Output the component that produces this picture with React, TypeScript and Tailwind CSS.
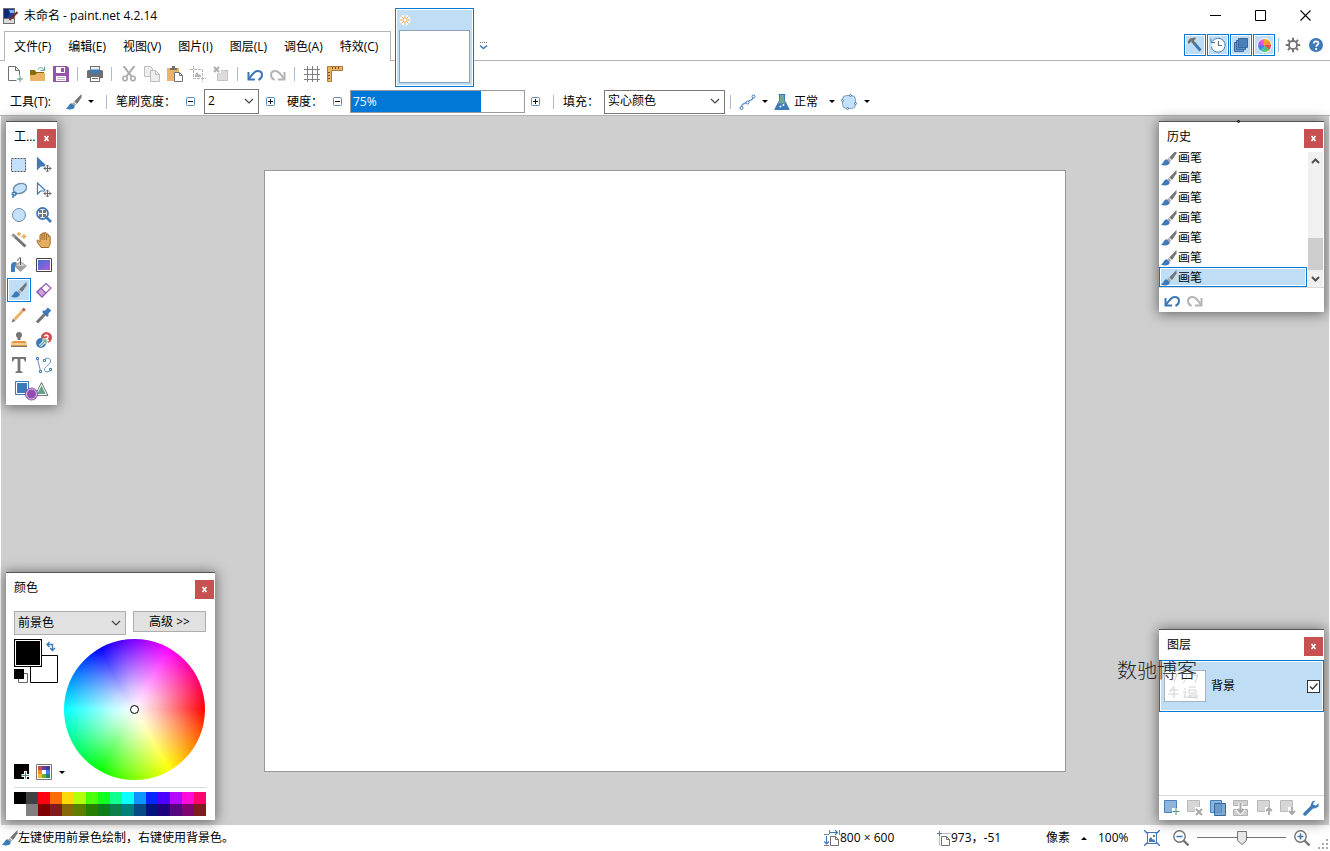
import { useState, type ReactNode } from 'react';
import { clsx } from 'clsx';

type IconProps = { children: ReactNode; w?: number; h?: number };

function Icon({ children, w = 16, h = 16 }: IconProps) {
  return (
    <svg width={w} height={h} viewBox={`0 0 ${w} ${h}`} fill="none" className="block shrink-0" aria-hidden="true">
      {children}
    </svg>
  );
}

/* ---------- shared glyphs ---------- */

const BrushIcon = () => (
  <Icon>
    <path d="M15.500 0 8.200 7.400l2.800 2.600 4.500-6.500z" fill="#757575" />
    <path d="m7.600 8-1.400 1.500 2.400 2.400 1.600-1.300z" fill="#a9a9a9" />
    <path d="M5.600 9.200c-2.800.1-2.600 3.600-5.600 5.300 3.600 1.900 9 .8 8.700-2.600z" fill="#3f7ab8" />
  </Icon>
);

const UndoIcon = () => (
  <Icon>
    <path d="M1.500 6v7.500H8" stroke="#3d77b3" strokeWidth="2" />
    <path d="M2 13C4.500 9 7 5 10.500 5c3 0 4.500 1.800 4.500 4 0 2.500-1.400 4-3.500 5" stroke="#3d77b3" strokeWidth="2" />
  </Icon>
);

const RedoIcon = () => (
  <Icon>
    <path d="M14.500 6v7.500H8" stroke="#b4b4b4" strokeWidth="2" />
    <path d="M14 13C11.500 9 9 5 5.500 5 2.500 5 1 6.800 1 9c0 2.500 1.400 4 3.500 5" stroke="#b4b4b4" strokeWidth="2" />
  </Icon>
);

const CaretIcon = ({ up = false }: { up?: boolean }) => (
  <Icon w={8} h={5}>
    <path d={up ? 'M1 4h6L4 1z' : 'M1 1h6L4 4z'} fill="#000" />
  </Icon>
);

const ChevronIcon = () => (
  <Icon w={10} h={7}>
    <path d="m1 1 4 4 4-4" stroke="#444" strokeWidth="1.200" />
  </Icon>
);

/* ---------- main toolbar ---------- */

const NewIcon = () => (
  <Icon>
    <path d="M9.500 14.500h-8v-14h7l4 4v5M8.500.5v4h4" stroke="#707070" />
    <path d="M13 10v6M10 13h6" stroke="#4f9878" />
  </Icon>
);
const OpenIcon = () => (
  <Icon>
    <path d="M0 4h5l1 2h8v3H0z" fill="#8a6a10" />
    <path d="M0 15V9h5l2-2h8v8z" fill="#e9b465" />
    <path d="M8 3.500c1-2.500 4-2.500 6 .5M14.500.5v4h-4" stroke="#62a589" />
  </Icon>
);
const SaveIcon = () => (
  <Icon>
    <path d="M0 0h14l2 2v14H0z" fill="#8f56ac" />
    <path d="M3 1h9v6H3zM3 10h10v5H3z" fill="#fff" />
    <path d="M8 2h3v4H8z" fill="#8f56ac" />
    <path d="M4 11.500h8M4 13.500h8" stroke="#b9b9b9" />
  </Icon>
);
const PrintIcon = () => (
  <Icon>
    <path d="M3 0h10v4H3z" fill="#707070" />
    <path d="M4 1h8v3H4z" fill="#eee" />
    <path d="M1 4h14l1 1v7H0V5z" fill="#707070" />
    <path d="M3 3.500h10v4H3z" fill="#3f7ab8" />
    <path d="M3 10h10v6H3z" fill="#707070" />
    <path d="M4 11h8v4H4z" fill="#fff" />
    <path d="M5 12.500h6" stroke="#707070" />
  </Icon>
);
const CutIcon = () => (
  <Icon>
    <path d="M2.500 0 11 11M13.500 0 5 11" stroke="#aaa" strokeWidth="2" />
    <circle cx="4" cy="12.500" r="2.200" stroke="#aaa" strokeWidth="1.600" />
    <circle cx="12" cy="12.500" r="2.200" stroke="#aaa" strokeWidth="1.600" />
  </Icon>
);
const CopyIcon = () => (
  <Icon>
    <path d="M.5.5h6l2 2v8h-8z" fill="#eee" stroke="#bdbdbd" />
    <path d="M6.500 4.500h5l4 4v7h-9z" fill="#eee" stroke="#bdbdbd" />
    <path d="M11.500 4.500v4h4" stroke="#bdbdbd" />
  </Icon>
);
const PasteIcon = () => (
  <Icon>
    <path d="M0 2h12v5H7v8H0z" fill="#e9b465" />
    <path d="M3 4V2h2V0h3v2h2v2z" fill="#707070" />
    <path d="M7.500 6.500h5l3 3v6h-8zM12.500 6.500v3h3" fill="#fff" stroke="#707070" />
  </Icon>
);
const CropIcon = () => (
  <Icon>
    <path d="M3.500 0v12.500H16M0 3.500h12.500V16" stroke="#b4b4b4" strokeDasharray="3 1" />
    <path d="M5 11V9l2-3 2 3 1-1 1.500 3z" fill="#b4b4b4" />
  </Icon>
);
const DeselectIcon = () => (
  <Icon>
    <path d="M4 4h11v11H4z" fill="#dcdcdc" />
    <path d="M4.500 4.500h10v10h-10z" stroke="#adadad" strokeDasharray="1 1" />
    <path d="M0 0h8v7H0z" fill="#fff" />
    <path d="m1 1 5 5M6 1 1 6" stroke="#adadad" strokeWidth="2" />
  </Icon>
);
const GridIcon = () => (
  <Icon>
    <path d="M3.500 0v16M8.500 0v16M13.500 0v16M0 3.500h16M0 8.500h16M0 13.500h16" stroke="#808080" />
  </Icon>
);
const RulerIcon = () => (
  <Icon>
    <path d="M.5.5h15v4h-11v11h-4z" fill="#e9b465" stroke="#a97c3c" />
    <path d="M5.500 1v2M8.500 1v2M11.500 1v2M1 6.500h2M1 9.500h2M1 12.500h2" stroke="#704d20" />
  </Icon>
);

/* ---------- window toggles ---------- */

const HammerIcon = () => (
  <Icon>
    <path d="m7 6 6.500 7.500" stroke="#3f7ab8" strokeWidth="3" />
    <path d="m5 4 3 3" stroke="#707070" strokeWidth="2.500" />
    <path d="M.5 5 3 1.500 8 .5l1 1-2.500 2.500L4 4.500 2 7z" fill="#707070" />
  </Icon>
);
const ClockIcon = () => (
  <Icon>
    <path d="M2.200 4.500a7 7 0 1 1-1 5" stroke="#3f7ab8" fill="#fff" />
    <path d="M8.500 4v4.500H12" stroke="#707070" strokeWidth="1.200" />
    <path d="M1 1.500v4h4" stroke="#3f7ab8" />
  </Icon>
);
const LayersIcon = () => (
  <Icon>
    <path d="M1.500 5.500h9v9h-9z" fill="#6f9fcf" stroke="#3668a0" />
    <path d="M3.500 3.500h9v9h-9z" fill="#5f93c6" stroke="#3668a0" />
    <path d="M5.500 1.500h9v9h-9z" fill="#4a7fb7" stroke="#3668a0" />
  </Icon>
);
const WheelIcon = () => (
  <span className="block size-[15px] rounded-full border border-white bg-[conic-gradient(#f5a623_0_12%,#ff8a3b_0_25%,#ef4b5f_0_37%,#5cc25c_0_50%,#47c2a5_0_62%,#4a7fe0_0_75%,#b058f0_0_87%,#f05cd8_0)]" />
);
const GearIcon = () => (
  <Icon>
    <circle cx="8" cy="8" r="4" stroke="#757575" strokeWidth="2" />
    <path
      d="M8 .8V4M8 12v3.200M.8 8H4M12 8h3.200M2.900 2.900 5.200 5.200M10.800 10.800l2.300 2.300M2.900 13.100l2.300-2.300M10.800 5.200l2.300-2.300"
      stroke="#757575"
      strokeWidth="2"
    />
    <circle cx="8" cy="8" r="3" fill="#fff" />
  </Icon>
);
const HelpIcon = () => (
  <Icon>
    <circle cx="8" cy="8" r="7" fill="#3f7ab8" />
    <path d="M5.800 6.500c0-3 4.600-2.800 4.600-.3 0 1.600-2.200 1.700-2.200 3.500M8.200 11v2" stroke="#fff" strokeWidth="1.800" />
  </Icon>
);

/* ---------- tool box ---------- */

const RectSelectIcon = () => (
  <Icon>
    <path d="M.5 1.500h14v13H.5z" fill="#c4e1fb" stroke="#555" strokeDasharray="2 1" />
  </Icon>
);
const MoveIcon = ({ solid = false }: { solid?: boolean }) => (
  <Icon>
    <path d="M1.500 1v11l3-3h5.500z" fill={solid ? '#3f7ab8' : '#fff'} stroke="#3f7ab8" strokeWidth="1.200" />
    <path d="M9 8h7v8H8z" fill="#fff" />
    <path
      d="M11.500 8v7M8 11.500h7M10 9.500l1.500-1.500L13 9.500M10 13.500l1.500 1.500 1.500-1.500M9.500 10 8 11.500 9.500 13M13.500 10l1.500 1.500-1.500 1.500"
      stroke="#666"
    />
  </Icon>
);
const LassoIcon = () => (
  <Icon>
    <ellipse cx="9" cy="6.500" rx="6.800" ry="4.800" transform="rotate(-20 9 6.500)" fill="#c4e1fb" stroke="#6f8ba6" strokeWidth="1.400" />
    <path d="M1 11.500c2-2 5-1 4 1s-4 0-4-.5M2 12v4" stroke="#3f7ab8" strokeWidth="1.600" />
  </Icon>
);
const EllipseSelectIcon = () => (
  <Icon>
    <circle cx="8" cy="8" r="6.500" fill="#c4e1fb" stroke="#6f8ba6" />
  </Icon>
);
const ZoomToolIcon = () => (
  <Icon>
    <circle cx="6.500" cy="6.500" r="5.500" fill="#fff" stroke="#3f7ab8" strokeWidth="1.800" />
    <path d="M3 3h3v3H3zM7 3h3v3H7zM3 7h3v3H3zM7 7h3v3H7z" fill="#777" />
    <path d="m10.500 10.500 4.500 4.500" stroke="#3f7ab8" strokeWidth="2.600" />
  </Icon>
);
const WandIcon = () => (
  <Icon>
    <path d="m1.500 2.500 13 12" stroke="#757575" strokeWidth="3" />
    <path d="M1 2.500 4 5.500" stroke="#aaa" strokeWidth="1.500" />
    <path d="M8 0v4M6 2h4M13 2v5M10.500 4.500h5" stroke="#eda94f" strokeWidth="1.400" />
  </Icon>
);
const HandIcon = () => (
  <Icon>
    <path
      d="M5 15.500C3.500 13 1 10.500 1 9s1.500-1 3 1V3.500c0-1.500 2-1.500 2 0V2c0-1.600 2.200-1.600 2.200 0v-.5c0-1.500 2.200-1.500 2.200 0v1.200c0-1.200 2-1.200 2 .3v1.500c0-1 1.800-1 1.800.5v6c0 2-1 3-1.500 4.500z"
      fill="#e4ae63"
      stroke="#9b6b2c"
    />
    <path d="M6 3.500V8M8.200 2v6M10.400 2.500V8" stroke="#9b6b2c" />
  </Icon>
);
const BucketIcon = () => (
  <Icon>
    <path d="m3 9 6.500-5L16 9l-6.500 6z" fill="#a0a0a0" />
    <path d="m9.500 5 5 4h-9z" fill="#d0d0d0" />
    <path d="M9.500 8V1c0-1-2 0-3 3" stroke="#555" />
    <path d="M0 15V9c0-4 4-5 6-3L4 9v6z" fill="#3f7ab8" />
  </Icon>
);
const GradientIcon = () => (
  <Icon>
    <defs>
      <linearGradient id="tool-gradient" x1="0" y1="0" x2="1" y2="1">
        <stop offset="0" stopColor="#3b6fd6" />
        <stop offset="1" stopColor="#b45ad8" />
      </linearGradient>
    </defs>
    <path d="M.5 1.500h15v13H.5z" fill="#fff" stroke="#444" />
    <path d="M2 3h12v10H2z" fill="url(#tool-gradient)" />
  </Icon>
);
const EraserIcon = () => (
  <Icon>
    <path d="m1 10 9-8.500 5 4.500-9 9z" fill="#fff" stroke="#9257b0" strokeWidth="1.200" />
    <path d="m1 10 4-4 5 5-4 4z" fill="#c9a3dc" stroke="#9257b0" strokeWidth="1.200" />
  </Icon>
);
const PencilIcon = () => (
  <Icon>
    <path d="m3.500 12.500 9-9.500" stroke="#e9b465" strokeWidth="3" />
    <path d="m12 3.500 1.800-1.800" stroke="#d0504c" strokeWidth="3" />
    <path d="m.5 15.500 1.500-4 2.500 2.500z" fill="#777" />
  </Icon>
);
const PickerIcon = () => (
  <Icon>
    <path d="M1 15.500 9 7" stroke="#757575" strokeWidth="3" />
    <path d="m7 4 5 5" stroke="#3f7ab8" strokeWidth="2.500" />
    <path d="m10 6 3.500-4" stroke="#3f7ab8" strokeWidth="4.500" />
  </Icon>
);
const StampIcon = () => (
  <Icon>
    <circle cx="8" cy="3" r="3" fill="#757575" />
    <path d="M6.500 5h3v3h-3z" fill="#757575" />
    <path d="M2 9h12l2 2v4H0v-4z" fill="#e09a3c" />
    <path d="M0 12h16" stroke="#fff" />
    <path d="M0 14.500h16" stroke="#757575" />
  </Icon>
);
const RecolorIcon = () => (
  <Icon>
    <circle cx="10.500" cy="5.500" r="5.500" fill="#cf5050" />
    <path d="M8.500 4.500c1-2.500 4-1.500 3.500.5s-2 2-3 3.500h4" stroke="#fff" strokeWidth="1.400" />
    <circle cx="5" cy="11" r="5" fill="#3f7ab8" />
    <path d="m4 14 6-6M6.500 8H10v3.500" stroke="#fff" strokeWidth="3" />
    <path d="m4 14 6-6M6.500 8H10v3.500" stroke="#5fa389" strokeWidth="1.200" />
  </Icon>
);
const TextIcon = () => (
  <Icon>
    <path d="M1 0h14v4.500h-1L12.500 2H9.400v12l2.100.8V16h-7v-1.200l2.100-.8V2H3.500L2 4.500H1z" fill="#757575" />
  </Icon>
);
const LineIcon = () => (
  <Icon>
    <path d="M1.500 2 4.500 14M8.500 4C8 .5 14.500 0 14.500 4S8.500 9 8.500 12.500s4.500 2.500 6.500.500" stroke="#5b8ec2" />
    <g fill="#fff" stroke="#3f7ab8">
      <path d="M.5.5h2v2h-2zM3.500 13.500h2v2h-2zM7.500 2.500h2v2h-2zM13.500 11.500h2v2h-2z" />
    </g>
  </Icon>
);
const ShapesIcon = () => (
  <Icon w={36} h={20}>
    <path d="M1.500.5h13v13h-13z" fill="#3f7ab8" stroke="#3f7ab8" />
    <path d="M2.500 1.500h11v11h-11z" stroke="#fff" />
    <path d="M27.500 1.500 34 14.500H21z" fill="#5fa389" stroke="#777" />
    <path d="M27.500 3.500 32.500 13.500h-10z" stroke="#fff" />
    <circle cx="17.500" cy="13" r="6" fill="#8f4fb0" stroke="#8f4fb0" />
    <circle cx="17.500" cy="13" r="5" stroke="#e0c8ec" />
  </Icon>
);

/* ---------- tool options ---------- */

const CurveIcon = () => (
  <Icon w={17}>
    <path d="M2.500 13.500c0-5 4-3.500 6-5.500s5-1 6-5" stroke="#6f9cc9" strokeWidth="1.400" />
    <circle cx="2.500" cy="14" r="1.500" fill="#fff" stroke="#3f7ab8" />
    <circle cx="8.500" cy="8.500" r="1.500" fill="#fff" stroke="#3f7ab8" />
    <circle cx="14.500" cy="2.500" r="1.500" fill="#fff" stroke="#3f7ab8" />
  </Icon>
);
const FlaskIcon = () => (
  <Icon>
    <path d="M4.500.5h7M5.500.5v6L.8 15.500h14.400l-4.700-9v-6" fill="#72a893" stroke="#3f7ab8" />
    <path d="M4 9.500h8l3.200 6H.8z" fill="#3f7ab8" />
    <circle cx="6.500" cy="12.500" r="1" fill="#fff" />
    <circle cx="9.500" cy="11" r="1" fill="#fff" />
  </Icon>
);
const SelectionQualityIcon = () => (
  <Icon>
    <rect x="1.500" y="1.500" width="13" height="13" rx="4" fill="#c4e1fb" stroke="#7f9db8" />
    <g fill="#fff" stroke="#3f7ab8">
      <circle cx="9.500" cy="1.500" r="1" />
      <circle cx="1.500" cy="6.500" r="1" />
      <circle cx="14.500" cy="9.500" r="1" />
      <circle cx="6.500" cy="14.500" r="1" />
    </g>
  </Icon>
);

/* ---------- layer commands ---------- */

const AddLayerIcon = () => (
  <Icon>
    <path d="M.5.5h12v12H.5z" fill="#8fb4da" stroke="#4a80b8" />
    <path d="M8 8h8v8H8z" fill="#fff" />
    <path d="M12 8v7M8.500 11.500h7" stroke="#4f9878" />
  </Icon>
);
const GrayLayerIcon = ({ children }: { children: ReactNode }) => (
  <Icon>
    <path d="M.5.5h12v11H.5z" fill="#d6d6d6" stroke="#b9b9b9" />
    <path d="M8 7h8v9H8z" fill="#fff" />
    {children}
  </Icon>
);
const DuplicateIcon = () => (
  <Icon>
    <path d="M.5.5h11v12H.5z" fill="#8fb4da" stroke="#4a80b8" />
    <path d="M4.500 3.500h11v12h-11z" fill="#5f93c6" fillOpacity=".8" stroke="#3668a0" />
  </Icon>
);
const MergeIcon = () => (
  <Icon>
    <path d="M.5.5h14v5H.5zM.5 9.500h14v6H.5z" fill="#d0d0d0" stroke="#b4b4b4" />
    <path d="M7.500 3v9M4 9l3.500 3.500L11 9" stroke="#fff" strokeWidth="4" />
    <path d="M7.500 3v9M4.500 9l3 3.500 3-3.500" stroke="#a8a8a8" strokeWidth="2" />
  </Icon>
);
const WrenchIcon = () => (
  <Icon>
    <path d="m2 14 7-7" stroke="#3f7ab8" strokeWidth="3.500" strokeLinecap="round" />
    <path d="M12.800.4 9.200 1.500 7.600 5l1.200 3L12 8.400 15.600 6.600V3.200L13 5.500l-2.500-.6-.3-1.900z" fill="#3f7ab8" />
  </Icon>
);

/* ---------- status bar ---------- */

const SizeIcon = () => (
  <Icon>
    <path d="M6.500 6.500h5l3 3v6h-8zM11.500 6.500v3h3" fill="#fff" stroke="#707070" />
    <path d="M6 2.500h7.500M11 0l2.500 2.500L11 5M2.500 6v8M0 11.500 2.500 14 5 11.500" stroke="#3f7ab8" strokeWidth="1.200" />
    <path d="M0 4.500h5M5.500 0v4M15.500 0v5M0 15.500h5" stroke="#808080" />
  </Icon>
);
const PositionIcon = () => (
  <Icon w={14}>
    <path d="M2.500 6.500V16M5.500 3.500H14" stroke="#808080" strokeDasharray="1 1" />
    <path d="M2.500 1v5M0 3.500h5" stroke="#3f7ab8" />
    <path d="M4.500 6.500h5l3 3v6h-8zM9.500 6.500v3h3" fill="#fff" stroke="#707070" />
  </Icon>
);
const FitIcon = () => (
  <Icon>
    <path d="M3.500 3v10M12.500 3v10M3 2.500h10M3 13.500h10" stroke="#3f7ab8" />
    <path d="m0 0 4 4M16 0l-4 4M0 16l4-4M16 16l-4-4" stroke="#3f7ab8" strokeWidth="1.400" />
    <path d="M5 12V9l2-2 2 3 1-1 1.500 3z" fill="#3f7ab8" />
    <path d="M9 5h2v2H9z" fill="#777" />
  </Icon>
);
const MagnifierIcon = ({ plus = false }: { plus?: boolean }) => (
  <Icon>
    <circle cx="6.500" cy="6.500" r="5.700" fill="#fff" stroke="#757575" strokeWidth="1.400" />
    <path d="m10.500 10.500 5 5" stroke="#757575" strokeWidth="2.400" />
    <path d={plus ? 'M3.500 6.500h6M6.500 3.500v6' : 'M3.500 6.500h6'} stroke="#3f7ab8" strokeWidth="1.600" />
  </Icon>
);

/* ---------- building blocks ---------- */

function Separator() {
  return (
    <span className="flex h-6 w-[11px] shrink-0 items-center justify-center">
      <span className="h-[14px] w-px bg-[#a9bfd3]" />
    </span>
  );
}

function ToolButton({ label, children }: { label: string; children: ReactNode }) {
  return (
    <button type="button" aria-label={label} className="flex h-6 w-[23px] shrink-0 items-center justify-center">
      {children}
    </button>
  );
}

function StepButton({ label, plus = false }: { label: string; plus?: boolean }) {
  return (
    <button type="button" aria-label={label} className="flex size-[9px] shrink-0 items-center justify-center">
      <Icon w={9} h={9}>
        <rect x=".5" y=".5" width="8" height="8" rx="1" fill="#fff" stroke="#5b8abb" />
        <path d={plus ? 'M2 4.500h5M4.500 2v5' : 'M2 4.500h5'} stroke="#111" />
      </Icon>
    </button>
  );
}

function Dropdown({ label, options, className }: { label: string; options: string[]; className: string }) {
  return (
    <div className={clsx('relative shrink-0 border', className)}>
      <select
        aria-label={label}
        className="block size-full appearance-none bg-transparent pr-5 pb-px pl-[3px] text-xs outline-none"
      >
        {options.map((o) => (
          <option key={o}>{o}</option>
        ))}
      </select>
      <span className="pointer-events-none absolute inset-y-0 right-1 flex items-center">
        <ChevronIcon />
      </span>
    </div>
  );
}

type PanelProps = { title: string; label?: string; className: string; children: ReactNode };

function Panel({ title, label = title, className, children }: PanelProps) {
  return (
    <section
      aria-label={label}
      className={clsx(
        'absolute flex flex-col border-t border-[#555] bg-white shadow-[0_1px_12px_1px_rgba(0,0,0,0.5)]',
        className,
      )}
    >
      <header className="flex h-[30px] shrink-0 items-start justify-between pt-[7px] pr-px pl-2">
        <h2 className="text-xs leading-4 whitespace-nowrap">{title}</h2>
        <button
          type="button"
          aria-label={`关闭${label}`}
          className="flex size-[19px] shrink-0 items-center justify-center bg-[#c75050]"
        >
          <Icon w={7} h={7}>
            <path d="m1.500 1 4 5M5.500 1l-4 5" stroke="#fff" strokeWidth="1.600" />
          </Icon>
        </button>
      </header>
      {children}
    </section>
  );
}

const MENUS = ['文件(F)', '编辑(E)', '视图(V)', '图片(I)', '图层(L)', '调色(A)', '特效(C)'];

const TOGGLES = [
  { label: '工具', icon: <HammerIcon /> },
  { label: '历史', icon: <ClockIcon /> },
  { label: '图层', icon: <LayersIcon /> },
  { label: '颜色', icon: <WheelIcon /> },
];

const TOOLS = [
  { id: '矩形选择', icon: <RectSelectIcon /> },
  { id: '移动像素', icon: <MoveIcon solid /> },
  { id: '套索选择', icon: <LassoIcon /> },
  { id: '移动选区', icon: <MoveIcon /> },
  { id: '椭圆选择', icon: <EllipseSelectIcon /> },
  { id: '缩放', icon: <ZoomToolIcon /> },
  { id: '魔术棒', icon: <WandIcon /> },
  { id: '平移', icon: <HandIcon /> },
  { id: '油漆桶', icon: <BucketIcon /> },
  { id: '渐变', icon: <GradientIcon /> },
  { id: '画笔', icon: <BrushIcon /> },
  { id: '橡皮擦', icon: <EraserIcon /> },
  { id: '铅笔', icon: <PencilIcon /> },
  { id: '取色器', icon: <PickerIcon /> },
  { id: '克隆图章', icon: <StampIcon /> },
  { id: '重新着色', icon: <RecolorIcon /> },
  { id: '文本', icon: <TextIcon /> },
  { id: '直线/曲线', icon: <LineIcon /> },
];

const PALETTE = [
  '#000000', '#404040', '#ff0010', '#ff6a0c', '#ffd80c', '#b6ff0c', '#4cff0c', '#10ff21',
  '#10ff90', '#0cffff', '#0c94ff', '#0626ff', '#4c00ff', '#b20cff', '#ff0cdc', '#ff066e',
  '#ffffff', '#808080', '#7f0000', '#7f1c20', '#866a0a', '#5b7f00', '#267f00', '#0c7f1c',
  '#0c7f4c', '#007f7f', '#064a86', '#00137f', '#21007f', '#57067f', '#7f066e', '#7f1c20',
];

function TitleBar() {
  return (
    <div className="flex h-[31px] items-center pl-[2px]">
      <Icon>
        <path d="M1 0h12v16H1z" fill="#6b6b6b" />
        <path d="M2 1h10v9H2z" fill="#173f9c" />
        <path d="M2 1h4l2 4-3 5H2z" fill="#0f2a70" />
        <path d="M7 2h5v3H8z" fill="#7fb4ec" />
        <path d="M2 11h10v4H2z" fill="#dcdcdc" />
        <path d="m15.500 4-8 8" stroke="#7c2a22" strokeWidth="2" />
      </Icon>
      <h1 className="ml-[6px] text-xs">未命名 - paint.net 4.2.14</h1>
      <div className="mr-[2px] ml-auto flex">
        <button type="button" aria-label="最小化" className="flex h-[30px] w-[45px] items-center justify-center">
          <Icon w={11} h={11}>
            <path d="M0 5.500h11" stroke="#000" />
          </Icon>
        </button>
        <button type="button" aria-label="最大化" className="flex h-[30px] w-[45px] items-center justify-center">
          <Icon w={11} h={11}>
            <path d="M.5.5h10v10H.5z" stroke="#000" />
          </Icon>
        </button>
        <button type="button" aria-label="关闭" className="flex h-[30px] w-[45px] items-center justify-center">
          <Icon w={11} h={11}>
            <path d="m.5.5 10 10M10.500.5l-10 10" stroke="#000" strokeWidth="1.100" />
          </Icon>
        </button>
      </div>
    </div>
  );
}

function MenuRow() {
  return (
    <div className="flex h-[30px]">
      <div className="w-1 border-b border-[#b4b4b4]" />
      <nav className="flex items-center gap-px border-x border-t border-[#b4b4b4] pr-1 pl-px text-xs">
        {MENUS.map((m) => (
          <button key={m} type="button" className="h-full px-2">
            {m}
          </button>
        ))}
      </nav>
      <div className="relative flex flex-1 items-start border-b border-[#b4b4b4]">
        {/* open document strip, taller than the menu row it hangs on */}
        <button
          type="button"
          aria-label="未命名"
          className="absolute -top-[23px] left-1 h-[79px] w-[79px] border border-[#0078d7] bg-white p-px"
        >
          <span className="flex h-full flex-col bg-[#bfddf5] px-[2px] pt-1 pb-[2px]">
            <Icon w={12} h={12}>
              <circle cx="6" cy="6" r="5.500" fill="#fff" fillOpacity=".8" />
              <path d="M6 1v10M1 6h10M2.500 2.500l7 7M9.500 2.500l-7 7" stroke="#eda94f" />
              <circle cx="6" cy="6" r="1.200" fill="#fff" />
            </Icon>
            <span className="mt-1 flex-1 border border-[#8ba3b8] bg-white" />
          </span>
        </button>
        <button type="button" aria-label="图像列表" className="mt-[10px] ml-[88px]">
          <Icon w={9} h={10}>
            <path d="M1 1.500h8" stroke="#777" strokeDasharray="1 1" />
            <path d="m1 4.500 3.500 3L8 4.500" stroke="#3f7ab8" strokeWidth="1.600" />
          </Icon>
        </button>
        <div className="mt-[2px] mr-[3px] ml-auto flex items-center">
          <div className="flex gap-px">
            {TOGGLES.map((t) => (
              <button
                key={t.label}
                type="button"
                aria-label={t.label}
                className="size-[22px] border border-[#0078d7] bg-white p-px"
              >
                <span className="flex size-full items-center justify-center bg-[#bfddf5]">{t.icon}</span>
              </button>
            ))}
          </div>
          <span className="mr-[2px] ml-[3px] h-[14px] w-px bg-[#a9bfd3]" />
          <ToolButton label="设置">
            <GearIcon />
          </ToolButton>
          <ToolButton label="帮助">
            <HelpIcon />
          </ToolButton>
        </div>
      </div>
    </div>
  );
}

function MainToolbar() {
  return (
    <div className="flex h-[27px] items-start pt-px pl-[3px]">
      <ToolButton label="新建"><NewIcon /></ToolButton>
      <ToolButton label="打开"><OpenIcon /></ToolButton>
      <ToolButton label="保存"><SaveIcon /></ToolButton>
      <Separator />
      <ToolButton label="打印"><PrintIcon /></ToolButton>
      <Separator />
      <ToolButton label="剪切"><CutIcon /></ToolButton>
      <ToolButton label="复制"><CopyIcon /></ToolButton>
      <ToolButton label="粘贴"><PasteIcon /></ToolButton>
      <ToolButton label="裁剪"><CropIcon /></ToolButton>
      <ToolButton label="取消选择"><DeselectIcon /></ToolButton>
      <Separator />
      <ToolButton label="撤销"><UndoIcon /></ToolButton>
      <ToolButton label="重做"><RedoIcon /></ToolButton>
      <Separator />
      <ToolButton label="网格"><GridIcon /></ToolButton>
      <ToolButton label="标尺"><RulerIcon /></ToolButton>
    </div>
  );
}

function OptionsBar() {
  const [hardness, setHardness] = useState(75);

  return (
    <div className="flex h-7 items-center border-b border-[#b4b4b4] pl-[10px] text-xs">
      <span className="w-14">工具(T):</span>
      <button type="button" aria-label="当前工具" className="flex w-[35px] items-center gap-[5px]">
        <BrushIcon />
        <CaretIcon />
      </button>
      <Separator />
      <span className="ml-1 w-[70px] whitespace-nowrap">笔刷宽度：</span>
      <StepButton label="减小宽度" />
      <Dropdown label="笔刷宽度" options={['2', '3', '4', '5']} className="ml-[9px] h-[25px] w-[55px] border-[#7a7a7a] bg-white" />
      <span className="w-[7px]" />
      <StepButton label="增大宽度" plus />
      <span className="ml-3 w-[46px] whitespace-nowrap">硬度：</span>
      <StepButton label="减小硬度" />
      <label className="relative ml-2 h-[23px] w-[175px] shrink-0 border border-[#9a9a9a] bg-white">
        <span className="block h-full bg-[#0078d7]" style={{ width: `${hardness}%` }} />
        <span className="absolute inset-y-0 left-[2px] flex items-center text-xs text-white">{hardness}%</span>
        <input
          type="range"
          aria-label="硬度"
          value={hardness}
          onChange={(e) => setHardness(Number(e.target.value))}
          className="absolute inset-0 size-full opacity-0"
        />
      </label>
      <span className="w-[6px]" />
      <StepButton label="增大硬度" plus />
      <span className="w-2" />
      <Separator />
      <span className="ml-1 w-[41px] whitespace-nowrap">填充：</span>
      <Dropdown label="填充" options={['实心颜色', '水平线', '垂直线']} className="h-6 w-[121px] border-[#7a7a7a] bg-white" />
      <Separator />
      <button type="button" aria-label="抗锯齿" className="ml-[3px] flex items-center gap-[5px]">
        <CurveIcon />
        <CaretIcon />
      </button>
      <button type="button" className="ml-[5px] flex items-center">
        <FlaskIcon />
        <span className="mr-[10px] ml-1">正常</span>
        <CaretIcon />
      </button>
      <button type="button" aria-label="选区质量" className="ml-[5px] flex items-center gap-[6px]">
        <SelectionQualityIcon />
        <CaretIcon />
      </button>
    </div>
  );
}

function ToolsPanel() {
  const [active, setActive] = useState('画笔');

  return (
    <Panel title="工..." label="工具" className="top-[5px] left-[5px] w-[51px]">
      <div className="grid grid-cols-[25px_25px] auto-rows-[25px] px-px pt-px">
        {TOOLS.map((t) => (
          <button
            key={t.id}
            type="button"
            aria-label={t.id}
            onClick={() => setActive(t.id)}
            className={clsx('size-6', t.id === active && 'border border-[#0078d7] p-px')}
          >
            <span className={clsx('flex size-full items-center justify-center', t.id === active && 'bg-[#bfddf5]')}>
              {t.icon}
            </span>
          </button>
        ))}
      </div>
      <button type="button" aria-label="形状" className="mb-1 flex justify-center pt-[3px]">
        <ShapesIcon />
      </button>
    </Panel>
  );
}

function HistoryPanel() {
  const rows = Array.from({ length: 7 }, () => '画笔');

  return (
    <Panel title="历史" className="top-[5px] right-[5px] w-[165px]">
      <div className="flex h-[136px] border-b border-[#dadada]">
        <ul className="flex flex-1 flex-col justify-end overflow-hidden text-xs leading-3">
          {rows.map((name, i) => (
            <li
              key={i}
              className={clsx(
                'flex h-5 shrink-0 items-center gap-px border pt-px pl-px',
                i === rows.length - 1
                  ? 'border-[#0078d7] bg-[#bfddf5] shadow-[inset_0_0_0_1px_#fff]'
                  : 'border-transparent',
              )}
            >
              <BrushIcon />
              <span>{name}</span>
            </li>
          ))}
        </ul>
        <div className="mr-px ml-px flex w-[15px] flex-col items-center bg-[#f0f0f0]">
          <span className="flex h-[17px] items-center">
            <Icon w={9} h={6}>
              <path d="m1 5 3.500-3.500L8 5" stroke="#505050" strokeWidth="2" />
            </Icon>
          </span>
          <span className="mt-auto h-8 w-full bg-[#cdcdcd]" />
          <span className="flex h-[17px] items-center">
            <Icon w={9} h={6}>
              <path d="m1 1 3.500 3.500L8 1" stroke="#505050" strokeWidth="2" />
            </Icon>
          </span>
        </div>
      </div>
      <div className="flex h-6 items-center pl-px">
        <ToolButton label="撤销"><UndoIcon /></ToolButton>
        <ToolButton label="重做"><RedoIcon /></ToolButton>
      </div>
    </Panel>
  );
}

function ColorsPanel() {
  return (
    <Panel title="颜色" className="bottom-[5px] left-[5px] w-[209px]">
      <div className="flex flex-col px-2 pt-2 pb-1">
        <div className="flex items-start justify-between pr-px">
          <Dropdown label="颜色目标" options={['前景色', '背景色']} className="h-6 w-28 border-[#adadad] bg-[#e1e1e1]" />
          <button type="button" className="h-[21px] w-[73px] border border-[#adadad] bg-[#e1e1e1] text-xs leading-4">
            高级 &gt;&gt;
          </button>
        </div>
        <div className="mt-1 flex justify-between pr-[2px]">
          <div className="flex flex-col justify-between">
            <Icon w={48} h={45}>
              <path d="M16.500 16.500h27v27h-27z" fill="#fff" stroke="#000" />
              <path d="M0 0h28v28H0z" fill="#000" />
              <path d="M1.500 1.500h25v25h-25z" stroke="#fff" />
              <path d="M4.500 34.500h9v9h-9z" fill="#fff" stroke="#666" />
              <path d="M0 30h10v10H0z" fill="#000" />
              <path d="M33 5.500h5.500V11M35.500 3 33 5.500 35.500 8M36 9l2.500 2.500L41 9" stroke="#3f7ab8" strokeWidth="1.400" />
            </Icon>
            <div className="flex items-center">
              <button type="button" aria-label="添加颜色到调色板">
                <Icon>
                  <path d="M0 0h15v15H0z" fill="#000" />
                  <path d="M11.500 7v8M7.500 11.500h8" stroke="#fff" strokeWidth="3" />
                  <path d="M11.500 8v7M8 11.500h7" stroke="#4f9878" />
                </Icon>
              </button>
              <button type="button" aria-label="调色板" className="ml-[6px] flex items-center gap-[6px]">
                <Icon>
                  <path d="M.5.500h15v15H.5z" fill="#fff" stroke="#777" />
                  <path d="M2 2h4v4H2z" fill="#c94f4f" />
                  <path d="M6 2h4v4H6z" fill="#6b3c9c" />
                  <path d="M10 2h4v4h-4z" fill="#3b3f94" />
                  <path d="M2 6h4v4H2z" fill="#f58a1f" />
                  <path d="M10 6h4v4h-4z" fill="#3f7fff" />
                  <path d="M2 10h4v4H2z" fill="#fbb91f" />
                  <path d="M6 10h4v4H6z" fill="#63ae45" />
                  <path d="M10 10h4v4h-4z" fill="#1f8567" />
                </Icon>
                <CaretIcon />
              </button>
            </div>
          </div>
          <div className="-ml-4 flex size-[141px] items-center justify-center rounded-full bg-[radial-gradient(closest-side,#fff_0%,rgba(255,255,255,0.75)_30%,rgba(255,255,255,0)_100%),conic-gradient(from_90deg,#f00,#ff0,#0f0,#0ff,#00f,#f0f,#f00)]">
            <span className="size-[9px] rounded-full border border-black bg-white" />
          </div>
        </div>
        <div className="mt-[7px] h-px bg-[#d3dde6]" />
        <div className="mt-1 grid grid-cols-[repeat(16,12px)] auto-rows-[12px]">
          {PALETTE.map((c, i) => (
            <button key={i} type="button" aria-label={c} style={{ backgroundColor: c }} />
          ))}
        </div>
      </div>
    </Panel>
  );
}

function LayersPanel() {
  return (
    <Panel title="图层" className="right-[5px] bottom-[5px] h-[191px] w-[165px]">
      <label className="flex h-[52px] items-center border border-[#0078d7] bg-[#bfddf5] pr-[3px] pl-1 text-xs shadow-[inset_0_0_0_1px_#fff]">
        <span className="flex h-8 w-[42px] items-center justify-center border border-[#a9b4bf] bg-white">
          <Icon w={38} h={28}>
            <path
              d="M6 3v6M11 2l-3 8M20 3c2 0 1 4-3 8M26 3h6l-3 8M7 15l-3 5M4 18h8M2 22h11M8 14v12M18 16l2 2M17 20h3l-2 5 14 1M23 15h7M23 18h7v3h-7zM23 23h8v2h-8z"
              stroke="#d2d2d2"
            />
          </Icon>
        </span>
        <span className="ml-[5px] flex-1">背景</span>
        <span className="relative">
          <input type="checkbox" defaultChecked className="peer block size-[13px] appearance-none border border-[#333] bg-white" />
          <span className="pointer-events-none absolute inset-0 hidden peer-checked:block">
            <Icon w={13} h={13}>
              <path d="m3 6.500 2.500 2.500L10.500 3.500" stroke="#333" strokeWidth="1.300" />
            </Icon>
          </span>
        </span>
      </label>
      <div className="flex-1" />
      <div className="flex h-[25px] items-center justify-between border-t border-[#dadada] px-px">
        <ToolButton label="添加图层"><AddLayerIcon /></ToolButton>
        <ToolButton label="删除图层">
          <GrayLayerIcon>
            <path d="m9 9 6 6M15 9l-6 6" stroke="#a8a8a8" strokeWidth="2" />
          </GrayLayerIcon>
        </ToolButton>
        <ToolButton label="复制图层"><DuplicateIcon /></ToolButton>
        <ToolButton label="向下合并"><MergeIcon /></ToolButton>
        <ToolButton label="上移图层">
          <GrayLayerIcon>
            <path d="M12 15V8M9 11l3-3 3 3" stroke="#a8a8a8" strokeWidth="1.800" />
          </GrayLayerIcon>
        </ToolButton>
        <ToolButton label="下移图层">
          <GrayLayerIcon>
            <path d="M12 7v7M9 11l3 3 3-3" stroke="#a8a8a8" strokeWidth="1.800" />
          </GrayLayerIcon>
        </ToolButton>
        <ToolButton label="图层属性"><WrenchIcon /></ToolButton>
      </div>
    </Panel>
  );
}

function StatusBar() {
  return (
    <footer className="flex h-[26px] items-center pl-[2px] text-xs whitespace-nowrap">
      <BrushIcon />
      <span>左键使用前景色绘制，右键使用背景色。</span>
      <div className="ml-auto flex items-center">
        <span className="flex w-[113px] items-center">
          <SizeIcon />
          800 × 600
        </span>
        <span className="flex w-[109px] items-center">
          <PositionIcon />
          973，-51
        </span>
        <button type="button" className="flex w-[52px] items-center gap-[10px]">
          像素
          <CaretIcon up />
        </button>
        <span className="w-[46px]">100%</span>
        <button type="button" aria-label="适合窗口"><FitIcon /></button>
        <button type="button" aria-label="缩小" className="ml-[13px]"><MagnifierIcon /></button>
        <span className="relative ml-2">
          <Icon w={89} h={16}>
            <path d="M0 7.500h89" stroke="#757575" />
            <path d="M40.500 1.500h9v9l-4.500 4-4.500-4z" fill="#e6e6e6" stroke="#757575" />
          </Icon>
          <input type="range" aria-label="缩放" className="absolute inset-0 size-full opacity-0" />
        </span>
        <button type="button" aria-label="放大" className="ml-2"><MagnifierIcon plus /></button>
        <span className="mr-[2px] ml-[7px] pt-3">
          <Icon w={11} h={11}>
            <path d="M9 0h2v2H9zM5 4h2v2H5zM9 4h2v2H9zM1 8h2v2H1zM5 8h2v2H5zM9 8h2v2H9z" fill="#aaa" />
          </Icon>
        </span>
      </div>
    </footer>
  );
}

export default function App() {
  return (
    <div className="flex min-h-screen flex-col bg-white font-['Open_Sans','Noto_Sans_CJK_SC',sans-serif] text-black">
      <TitleBar />
      <MenuRow />
      <MainToolbar />
      <OptionsBar />
      <main className="relative mx-px flex flex-1 items-center justify-center bg-[#cfcfcf]">
        <div className="h-[602px] w-[802px] border border-[#999] bg-white" />
        <ToolsPanel />
        <HistoryPanel />
        <ColorsPanel />
        <LayersPanel />
        {/* brush cursor and the ink that floats over the layer list */}
        <span className="absolute top-1 right-[89px] size-[3px] rounded-full border border-black" />
        <span className="absolute right-[132px] bottom-[141px] font-['Noto_Sans_CJK_SC',sans-serif] text-xl leading-7 font-light text-[#222]">
          数驰博客
        </span>
      </main>
      <StatusBar />
    </div>
  );
}
